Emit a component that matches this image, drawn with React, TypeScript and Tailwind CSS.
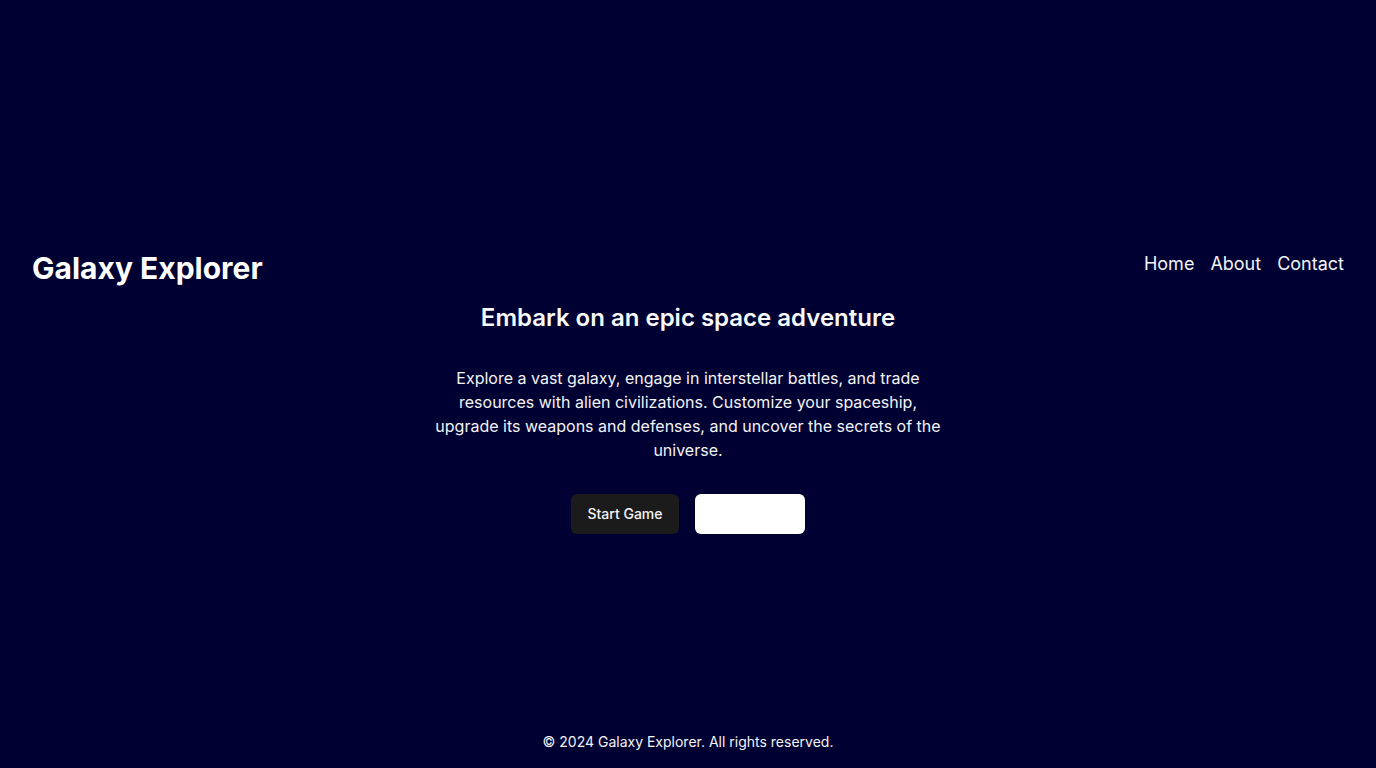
export default function App() {
  return (
    <div
      className="min-h-screen flex flex-col bg-[#000033] text-white"
      style={{ fontFamily: "Inter, 'Noto Sans', sans-serif" }}
    >
      <div className="flex-1 flex flex-col justify-center pt-[52px]">
        {/* Header */}
        <header className="flex justify-between items-start px-8 py-4">
          <h1 className="text-3xl font-bold text-white">Galaxy Explorer</h1>
          <nav>
            <ul className="flex gap-4 text-lg text-gray-100">
              <li>Home</li>
              <li>About</li>
              <li>Contact</li>
            </ul>
          </nav>
        </header>

        {/* Hero */}
        <main className="flex flex-col items-center text-center px-4">
          <h2 className="text-2xl font-semibold mb-8 text-gray-50">
            Embark on an epic space adventure
          </h2>
          <p className="max-w-lg text-base leading-6 mb-8 text-gray-100">
            Explore a vast galaxy, engage in interstellar battles, and trade
            resources with alien civilizations. Customize your spaceship,
            upgrade its weapons and defenses, and uncover the secrets of the
            universe.
          </p>
          <div className="flex gap-4">
            <button className="bg-[#1c1b1b] text-gray-100 text-sm font-medium px-4 py-2 h-10 rounded-md">
              Start Game
            </button>
            <button className="bg-white text-white text-sm font-medium px-4 py-2 h-10 w-[110px] rounded-md">
              Learn More
            </button>
          </div>
        </main>
      </div>

      {/* Footer */}
      <footer className="py-4 text-center text-sm text-gray-100">
        © 2024 Galaxy Explorer. All rights reserved.
      </footer>
    </div>
  );
}
